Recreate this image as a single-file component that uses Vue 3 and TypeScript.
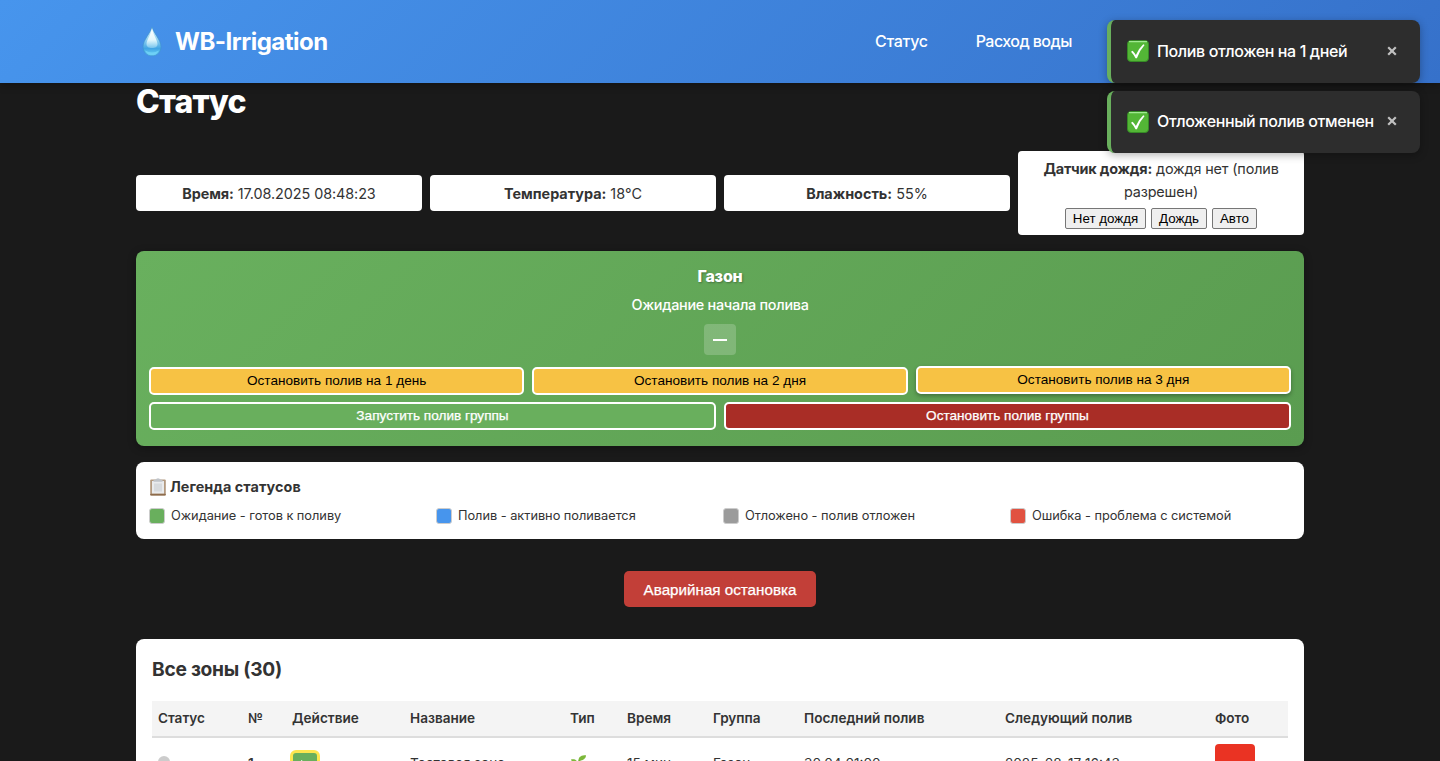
<script setup lang="ts">
interface Toast { id: number; text: string }
interface LegendItem { key: string; label: string }

const toasts: Toast[] = [
  { id: 1, text: 'Полив отложен на 1 дней' },
  { id: 2, text: 'Отложенный полив отменен' },
]

const stats = [
  { label: 'Время:', value: '17.08.2025 08:48:23', key: 'time' },
  { label: 'Температура:', value: '18°C', key: 'temp' },
  { label: 'Влажность:', value: '55%', key: 'hum' },
]

const delays: string[] = ['1 день', '2 дня', '3 дня']

const legend: LegendItem[] = [
  { key: 'waiting', label: 'Ожидание - готов к поливу' },
  { key: 'watering', label: 'Полив - активно поливается' },
  { key: 'postponed', label: 'Отложено - полив отложен' },
  { key: 'error', label: 'Ошибка - проблема с системой' },
]

const columns: string[] = [
  'Статус', '№', 'Действие', 'Название', 'Тип', 'Время', 'Группа',
  'Последний полив', 'Следующий полив', 'Фото',
]
</script>

<template>
  <div class="page">
    <header class="header">
      <div class="header-inner">
        <div class="logo">
          <svg class="drop" viewBox="0 0 32 32" width="32" height="32">
            <defs>
              <linearGradient id="dropFill" x1="0" y1="0" x2="0" y2="1">
                <stop offset="0" stop-color="#d9f1fb" />
                <stop offset="0.45" stop-color="#8fd0f0" />
                <stop offset="0.75" stop-color="#41a5e4" />
                <stop offset="1" stop-color="#6fd6f8" />
              </linearGradient>
              <linearGradient id="dropShine" x1="0" y1="0" x2="0" y2="1">
                <stop offset="0" stop-color="#ffffff" />
                <stop offset="0.6" stop-color="#e2f7fc" />
                <stop offset="1" stop-color="#a5def5" stop-opacity="0.5" />
              </linearGradient>
            </defs>
            <path d="M16 1C14.800 6.500 7 14 7 20.700C7 26.200 11 29.800 16 29.800S25 26.200 25 20.700C25 14 17.200 6.500 16 1Z" fill="url(#dropFill)" stroke="#3f93cf" stroke-width="0.700" />
            <path d="M16 2C15.300 8 10.500 14 10.500 18C10.500 21 13 22 16 22S21.500 21 21.500 18C21.500 14 16.700 8 16 2Z" fill="url(#dropShine)" />
            <path d="M9 24.500Q16 28.500 23 24.500Q20.500 29 16 29T9 24.500Z" fill="#6fd0f6" />
          </svg>
          <span class="logo-text">WB-Irrigation</span>
        </div>
        <nav class="nav">
          <a class="nav-status">Статус</a>
          <a class="nav-water">Расход воды</a>
        </nav>
      </div>
    </header>

    <main class="container">
      <h1 class="title">Статус</h1>

      <section class="stats">
        <div v-for="s in stats" :key="s.key" class="stat">
          <span :class="['stat-text', s.key]"><b>{{ s.label }}</b> {{ s.value }}</span>
        </div>
        <div class="stat rain">
          <div class="rain-text"><b>Датчик дождя:</b> дождя нет (полив<br>разрешен)</div>
          <div class="rain-buttons">
            <button class="rb1">Нет дождя</button>
            <button class="rb2">Дождь</button>
            <button class="rb3">Авто</button>
          </div>
        </div>
      </section>

      <section class="group">
        <div class="group-name">Газон</div>
        <div class="group-status">Ожидание начала полива</div>
        <div class="group-timer"><span class="dash"></span></div>
        <div class="group-row">
          <button v-for="(d, i) in delays" :key="d" :class="['gbtn', 'delay', { raised: i === 2 }]">Остановить полив на {{ d }}</button>
        </div>
        <div class="group-row">
          <button class="gbtn start">Запустить полив группы</button>
          <button class="gbtn stop">Остановить полив группы</button>
        </div>
      </section>

      <section class="legend">
        <div class="legend-title">
          <svg class="clipboard" viewBox="0 0 18 20" width="18" height="20">
            <rect x="1.200" y="2.500" width="15.600" height="16" rx="1" fill="#b39a80" />
            <rect x="1.200" y="16.800" width="15.600" height="1.700" rx="0.800" fill="#8e6c4c" />
            <rect x="3" y="4" width="12" height="12.500" fill="#e9ebed" />
            <rect x="5" y="6.500" width="8" height="8" fill="#d7dadd" />
            <path d="M4.500 4.800V3Q7 2.800 7.500 1.800Q9 0.600 10.500 1.800Q11 2.800 13.500 3V4.800Z" fill="#c0c4c9" />
          </svg>
          <span class="legend-heading">Легенда статусов</span>
        </div>
        <div class="legend-items">
          <div v-for="l in legend" :key="l.key" class="legend-item">
            <span :class="['swatch', l.key]"></span>
            <span :class="['legend-label', l.key + '-label']">{{ l.label }}</span>
          </div>
        </div>
      </section>

      <div class="emergency-wrap">
        <button class="emergency">Аварийная остановка</button>
      </div>

      <section class="zones">
        <h2 class="zones-title">Все зоны (30)</h2>
        <div class="grid head">
          <div v-for="c in columns" :key="c" class="cell">{{ c }}</div>
        </div>
        <div class="grid row">
          <div class="cell"><span class="dot"></span></div>
          <div class="cell number">1</div>
          <div class="cell action-cell">
            <button class="play">
              <svg viewBox="0 0 12 12" width="12" height="12"><path d="M2 1L11 6L2 11Z" fill="#fff" /></svg>
            </button>
          </div>
          <div class="cell">Тестовая зона</div>
          <div class="cell">
            <svg class="sprout" viewBox="0 0 18 18" width="18" height="18">
              <path d="M8 17Q7.500 9 10 5.500" stroke="#6fa92f" stroke-width="1.800" fill="none" />
              <path d="M8.500 6.500C8.500 2.500 11.500 1.200 16 1.200C16 4.500 13 6.800 8.500 6.500Z" fill="#7cb83a" />
              <path d="M8 9.500C7 5.500 4 5 1 5.500C2 8.500 4.500 10 8 9.500Z" fill="#7cb83a" />
            </svg>
          </div>
          <div class="cell">15 мин</div>
          <div class="cell">Газон</div>
          <div class="cell">30.04 01:00</div>
          <div class="cell">2025-08-17 16:43</div>
          <div class="cell photo-cell"><span class="photo"></span></div>
        </div>
      </section>
    </main>

    <div class="toasts">
      <div v-for="t in toasts" :key="t.id" :class="['toast', 'toast-' + t.id]">
        <svg class="check" viewBox="0 0 22 22" width="22" height="22">
          <rect x="0.500" y="0.500" width="21" height="21" rx="3.500" fill="#53b636" stroke="#368b26" />
          <path d="M2.500 1.700H19.500" stroke="#a0ea91" stroke-width="1.300" stroke-linecap="round" />
          <path d="M4 11.700L5.600 10.700Q7.500 12.700 8.900 15Q11.500 8.500 16.300 4.200L17.600 4.900Q12.500 10.500 9.900 18.300H8.500Q6.800 14.500 4 11.700Z" fill="#fff" />
        </svg>
        <span class="toast-text">{{ t.text }}</span>
        <svg class="close" viewBox="0 0 10 10" width="10" height="10"><path d="M1.200 1.200L8.800 8.800M8.800 1.200L1.200 8.800" stroke="#c0c0c0" stroke-width="2.200" /></svg>
      </div>
    </div>
  </div>
</template>

<style>
html, body { height: 100%; margin: 0; overflow: hidden; background: #1a1a1a; }
</style>

<style scoped>
* { box-sizing: border-box; }
.page {
  position: relative;
  height: 761px;
  overflow: hidden;
  background: #1a1a1a;
  color: #333;
  font-family: Inter, "Liberation Sans", sans-serif;
  font-size: 14px;
}
button { font-family: "Liberation Sans", Arial, sans-serif; }
.header {
  height: 83px;
  background: linear-gradient(135deg, #4795ed 0%, #3671ca 100%);
  box-shadow: 0 2px 8px rgba(0, 0, 0, 0.3);
}
.header-inner {
  width: 1168px;
  height: 83px;
  margin: 0 auto;
  display: flex;
  align-items: center;
}
.logo { display: flex; align-items: center; gap: 7px; color: #fff; width: 739px; }
.drop { display: block; flex: none; }
.logo-text { font-size: 24px; font-weight: 700; line-height: 32px; letter-spacing: -0.5px; white-space: nowrap; }
.nav { display: flex; gap: 48px; color: #fff; font-size: 16px; font-weight: 500; line-height: 24px; white-space: nowrap; padding-bottom: 2px; }
.nav-status { letter-spacing: -0.3px; }
.nav-water { letter-spacing: -0.55px; }
.container { width: 1168px; margin: 0 auto; }
.title { margin: 0; height: 68px; color: #fff; font-size: 32px; font-weight: 800; line-height: 38px; letter-spacing: -0.8px; }
.stats { display: grid; grid-template-columns: repeat(4, 286px); gap: 8px; align-items: center; }
.stat {
  height: 36px;
  border-radius: 4px;
  background: #fff;
  display: flex;
  align-items: center;
  justify-content: center;
  white-space: nowrap;
  font-size: 14.400px;
  line-height: 23px;
}
.time { letter-spacing: -0.08px; }
.rain { height: 84px; flex-direction: column; justify-content: flex-start; padding-top: 6px; }
.rain-text { text-align: center; letter-spacing: -0.15px; }
.rain-buttons { display: flex; gap: 5px; margin-top: 5px; }
.rain-buttons button {
  height: 21px;
  padding: 0;
  border: 1px solid #767676;
  border-radius: 2px;
  background: #efefef;
  color: #000;
  font-size: 13.333px;
  line-height: 18px;
}
.rb1 { width: 81px; }
.rb2 { width: 56px; }
.rb3 { width: 45px; }
.group {
  height: 195px;
  margin-top: 16px;
  padding: 13px 13px 0;
  border-radius: 8px;
  background: linear-gradient(135deg, #69b05e 0%, #5a9c50 100%);
  box-shadow: 0 2px 8px rgba(0, 0, 0, 0.3);
  color: #fff;
  text-align: center;
}
.group-name { font-size: 16px; font-weight: 800; line-height: 24px; letter-spacing: -0.2px; text-shadow: 1px 1px 2px rgba(0, 0, 0, 0.3); }
.group-status { font-size: 14.400px; font-weight: 500; line-height: 22px; margin-top: 6px; letter-spacing: -0.27px; }
.group-timer {
  width: 32px;
  height: 31px;
  margin: 8px auto 12px;
  border-radius: 4px;
  background: rgba(255, 255, 255, 0.2);
  display: flex;
  align-items: center;
  justify-content: center;
}
.dash { width: 14px; height: 2px; background: #fff; margin-top: 1px; }
.group-row { display: flex; gap: 8px; margin-bottom: 7px; }
.gbtn {
  flex: 1;
  height: 28px;
  padding: 0;
  border: 2px solid #fff;
  border-radius: 5px;
  color: #fff;
  font-size: 13.600px;
  line-height: 20px;
  white-space: nowrap;
}
.delay { background: #f7c244; color: #000; }
.raised { transform: translateY(-1px); box-shadow: 0 2px 4px rgba(0, 0, 0, 0.3); }
.start { background: #69af5d; -webkit-text-stroke: 0.250px #fff; }
.stop { background: #a92d26; -webkit-text-stroke: 0.250px #fff; }
.legend { height: 77px; margin-top: 16px; padding: 15px 13px 0; border-radius: 8px; background: #fff; }
.legend-title { display: flex; gap: 3px; align-items: center; height: 20px; font-size: 14.400px; font-weight: 700; }
.legend-heading { padding-bottom: 2px; letter-spacing: 0.050px; }
.clipboard { margin-top: -1px; }
.legend-items { display: grid; grid-template-columns: repeat(4, 279px); gap: 8px; margin-top: 9px; }
.legend-item { display: flex; align-items: center; gap: 6px; height: 20px; }
.swatch { width: 16px; height: 16px; border: 1px solid #ccc; border-radius: 3px; }
.waiting { background: #69af5d; }
.watering { background: #4795ed; }
.postponed { background: #9b9b9b; }
.error { background: #e15241; }
.legend-label { font-size: 12.800px; white-space: nowrap; padding-bottom: 2px; letter-spacing: -0.03px; }
.emergency-wrap { display: flex; justify-content: center; margin: 32px 0; }
.emergency {
  width: 192px;
  height: 36px;
  padding: 2px 0 0;
  border: 0;
  border-radius: 5px;
  background: #c23f38;
  color: #fff;
  font-size: 15.200px;
  line-height: 34px;
  -webkit-text-stroke: 0.250px #fff;
}
.zones { height: 240px; padding: 15px 16px; border-radius: 8px; background: #fff; }
.zones-title { margin: 0 0 17px; font-size: 19.200px; font-weight: 700; line-height: 30px; letter-spacing: -0.27px; }
.grid { display: grid; grid-template-columns: 90px 44px 118px 160px 57px 86px 91px 201px 210px 79px; }
.cell { padding-left: 6px; font-size: 13.600px; white-space: nowrap; display: flex; align-items: center; }
.head { height: 37px; background: #f4f4f4; border-bottom: 2px solid #ddd; font-weight: 600; }
.head .cell { padding-bottom: 2px; }
.row { height: 50px; color: #333; }
.number { font-weight: 600; }
.dot { width: 12px; height: 12px; border-radius: 50%; background: #ccc; margin-bottom: 2px; }
.play {
  width: 30px;
  height: 30px;
  padding: 0;
  margin: 4px 0 0 -2px;
  border: 3px solid #fde64f;
  border-radius: 6px;
  background: #69af5d;
  display: flex;
  align-items: center;
  justify-content: center;
}
.photo { width: 40px; height: 40px; border-radius: 4px; background: #ea3323; margin-top: 2px; }
.toasts {
  position: absolute;
  top: 20px;
  left: 1107px;
  width: 313px;
  display: flex;
  flex-direction: column;
  gap: 8px;
}
.toast {
  height: 63px;
  padding: 0 23px 0 16px;
  border-left: 4px solid #69af5d;
  border-radius: 8px;
  background: #2d2d2d;
  box-shadow: 0 2px 8px rgba(0, 0, 0, 0.3);
  display: flex;
  align-items: center;
  color: #fff;
}
.toast-2 { height: 62px; }
.toast-1 .check { margin-top: -1px; }
.check { flex: none; }
.toast-text { margin-left: 8px; font-size: 16px; font-weight: 500; line-height: 24px; white-space: nowrap; padding-bottom: 2px; letter-spacing: -0.38px; }
.close { flex: none; margin-left: auto; margin-top: -2px; }
</style>
